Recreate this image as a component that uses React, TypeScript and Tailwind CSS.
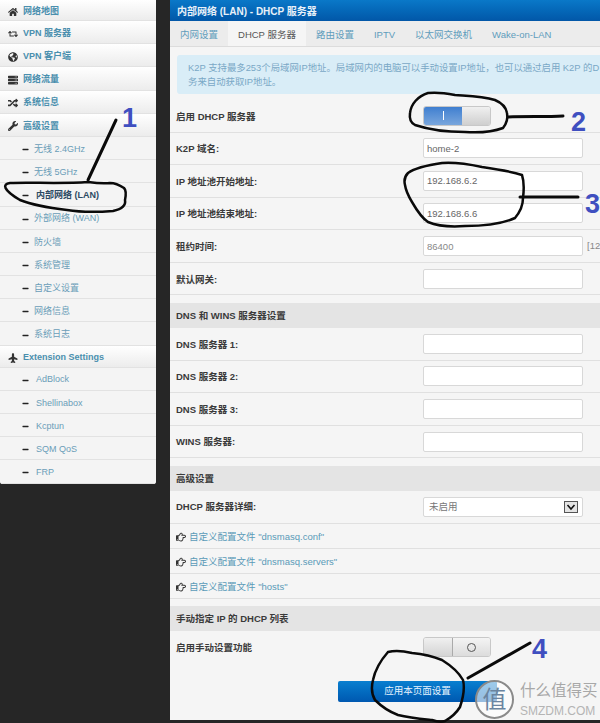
import React from 'react';
import {
  FaHome,
  FaRetweet,
  FaGlobeAmericas,
  FaServer,
  FaRandom,
  FaWrench,
  FaPlane,
  FaMinus,
  FaRegHandPointRight,
} from 'react-icons/fa';

const FONT = "font-['Liberation_Sans','Noto_Sans_CJK_SC',sans-serif]";

const topItems = [
  { label: '网络地图', icon: FaHome, h: 'h-[21px]' },
  { label: 'VPN 服务器', icon: FaRetweet, h: 'h-[23.2px]' },
  { label: 'VPN 客户端', icon: FaGlobeAmericas, h: 'h-[23.2px]' },
  { label: '网络流量', icon: FaServer, h: 'h-[23.2px]' },
  { label: '系统信息', icon: FaRandom, h: 'h-[23.2px]' },
  { label: '高级设置', icon: FaWrench, h: 'h-[23.2px]' },
];

const advItems = ['无线 2.4GHz', '无线 5GHz', '内部网络 (LAN)', '外部网络 (WAN)', '防火墙', '系统管理', '自定义设置', '网络信息', '系统日志'];
const extItems = ['AdBlock', 'Shellinabox', 'Kcptun', 'SQM QoS', 'FRP'];

const tabs = ['内网设置', 'DHCP 服务器', '路由设置', 'IPTV', '以太网交换机', 'Wake-on-LAN'];

function HeadItem({ label, icon: Icon, h, iconClass }: { label: string; icon: React.ComponentType<{ className?: string }>; h: string; iconClass?: string }) {
  return (
    <div className={`${h} pt-[3px] flex items-center pl-[8px] border-b border-[#e2e2e2] bg-gradient-to-b from-white to-[#ececec]`}>
      <Icon className={`w-[10px] h-[10px] text-[#333] shrink-0 ${iconClass ?? ''}`} />
      <span className="ml-[5px] text-[9px] font-bold text-[#4a8fae]">{label}</span>
    </div>
  );
}

function SubItem({ label, active, wide }: { label: string; active?: boolean; wide?: boolean }) {
  return (
    <div className="h-[23.2px] pt-[3px] flex items-center pl-[22px] border-b border-[#e2e2e2] bg-[#f4f4f4]">
      <FaMinus className="w-[7px] h-[7px] text-[#222] shrink-0" />
      <span className={active ? 'ml-[7px] text-[9px] font-bold text-[#2c4a63]' : `${wide ? 'ml-[7px]' : 'ml-[5px]'} text-[9px] text-[#6a9db8]`}>{label}</span>
    </div>
  );
}

function Section({ title }: { title: string }) {
  return <div className="h-[25px] pt-[2px] flex items-center pl-[6px] bg-[#e4e4e4] text-[9.5px] font-bold text-[#3a3a3a]">{title}</div>;
}

function InputRow({ label, value, muted, note }: { label: string; value?: string; muted?: boolean; note?: string }) {
  return (
    <div className="h-[32.6px] flex items-center border-b border-[#e0e0e0] pl-[6px]">
      <span className="w-[247px] shrink-0 pt-[2px] text-[9.5px] font-bold text-[#3a3a3a]">{label}</span>
      <input
        readOnly
        value={value ?? ''}
        className={`w-[160px] shrink-0 h-[20px] px-[3px] text-[9.5px] border border-[#d8d8d8] rounded-[2px] bg-white outline-none ${muted ? 'text-[#888]' : 'text-[#666]'}`}
      />
      {note && <span className="ml-[4px] text-[9.5px] text-[#888] whitespace-nowrap">{note}</span>}
    </div>
  );
}

function LinkRow({ text }: { text: string }) {
  return (
    <div className="h-[25px] pt-[2px] flex items-center pl-[6px] border-b border-[#e0e0e0]">
      <FaRegHandPointRight className="w-[10px] h-[10px] text-[#333]" />
      <span className="ml-[3px] text-[9.5px] text-[#5a9ab8]">{text}</span>
    </div>
  );
}

export default function App() {
  return (
    <div className={`${FONT} relative w-[600px] h-[723px] overflow-hidden bg-[#262626] flex items-start`}>
      {/* Left menu */}
      <div className="w-[156px] shrink-0 bg-[#f4f4f4] rounded-b-[3px] overflow-hidden">
        {topItems.map((item) => (
          <HeadItem key={item.label} {...item} />
        ))}
        {advItems.map((label) => (
          <SubItem key={label} label={label} active={label === '内部网络 (LAN)'} />
        ))}
        <HeadItem label="Extension Settings" icon={FaPlane} h="h-[22px]" iconClass="-rotate-90" />
        {extItems.map((label) => (
          <SubItem key={label} label={label} wide />
        ))}
      </div>

      {/* Main panel */}
      <div className="ml-[14px] w-[430px] h-[720px] bg-[#f5f5f5] overflow-hidden">
        <div className="h-[21px] pt-[2px] flex items-center pl-[7px] bg-gradient-to-b from-[#0a78c8] to-[#0257a8] text-[10px] font-bold text-[#e8f0f8] whitespace-nowrap">
          内部网络 (LAN) - DHCP 服务器
        </div>
        <div className="h-[26px] flex items-end bg-[#ececec] border-b border-[#dcdcdc]">
          {tabs.map((tab, i) => (
            <div
              key={tab}
              className={
                i === 1
                  ? 'h-[25px] pt-[4px] px-[10px] flex items-center bg-[#f5f5f5] text-[9.5px] text-[#555] whitespace-nowrap'
                  : 'h-[25px] pt-[4px] px-[10px] flex items-center text-[9.5px] text-[#5f9dbc] whitespace-nowrap'
              }
            >
              {tab}
            </div>
          ))}
        </div>
        <div className="ml-[7px] mt-[8px] h-[39px] pl-[11px] pt-[6px] bg-[#d9edf7] rounded-l-[3px] text-[9.4px] leading-[13.5px] text-[#7aa8c6] whitespace-nowrap overflow-hidden">
          <div>K2P 支持最多253个局域网IP地址。局域网内的电脑可以手动设置IP地址，也可以通过启用 K2P 的D</div>
          <div>务来自动获取IP地址。</div>
        </div>

        <div className="h-[38.5px] pt-[6px] flex items-center border-b border-[#e0e0e0] pl-[6px]">
          <span className="w-[247px] shrink-0 pt-[2px] text-[9.5px] font-bold text-[#3a3a3a]">启用 DHCP 服务器</span>
          <div className="w-[68px] h-[20px] flex rounded-[3px] border border-[#c8c8c8] overflow-hidden">
            <div className="w-[38px] flex items-center justify-center bg-gradient-to-b from-[#3f7fd0] to-[#79a6dc]">
              <div className="w-[1px] h-[9px] bg-white" />
            </div>
            <div className="flex-1 bg-gradient-to-b from-[#f0f0f0] to-[#cfcfcf]" />
          </div>
        </div>
        <InputRow label="K2P 域名:" value="home-2" />
        <InputRow label="IP 地址池开始地址:" value="192.168.6.2" />
        <InputRow label="IP 地址池结束地址:" value="192.168.6.6" />
        <InputRow label="租约时间:" value="86400" muted note="[12" />
        <InputRow label="默认网关:" />
        <div className="h-[7.5px]" />
        <Section title="DNS 和 WINS 服务器设置" />
        <InputRow label="DNS 服务器 1:" />
        <InputRow label="DNS 服务器 2:" />
        <InputRow label="DNS 服务器 3:" />
        <InputRow label="WINS 服务器:" />
        <div className="h-[7.6px]" />
        <Section title="高级设置" />
        <div className="h-[33px] flex items-center border-b border-[#e0e0e0] pl-[6px]">
          <span className="w-[247px] shrink-0 text-[9.5px] font-bold text-[#3a3a3a]">DHCP 服务器详细:</span>
          <div className="w-[160px] h-[20px] flex items-center justify-between pl-[5px] pr-[4px] border border-[#d8d8d8] rounded-[2px] bg-white text-[9.5px] text-[#777]">
            未启用
            <svg viewBox="0 0 14 12" className="w-[14px] h-[12px]">
              <rect x="0.5" y="0.5" width="13" height="11" fill="#e4e4e4" stroke="#555" />
              <path d="M3.5 4 L7 8 L10.5 4" fill="none" stroke="#111" strokeWidth="1.6" />
            </svg>
          </div>
        </div>
        <LinkRow text={'自定义配置文件 "dnsmasq.conf"'} />
        <LinkRow text={'自定义配置文件 "dnsmasq.servers"'} />
        <LinkRow text={'自定义配置文件 "hosts"'} />
        <div className="h-[7px]" />
        <Section title="手动指定 IP 的 DHCP 列表" />
        <div className="h-[33px] flex items-center pl-[6px]">
          <span className="w-[247px] shrink-0 pt-[2px] text-[9.5px] font-bold text-[#3a3a3a]">启用手动设置功能</span>
          <div className="w-[68px] h-[20px] flex rounded-[3px] border border-[#c8c8c8] overflow-hidden">
            <div className="w-[29px] bg-gradient-to-b from-[#f0f0f0] to-[#d4d4d4] border-r border-[#aaa]" />
            <div className="flex-1 flex items-center justify-center bg-gradient-to-b from-[#f4f4f4] to-[#dcdcdc]">
              <div className="w-[9px] h-[9px] rounded-full border border-[#555]" />
            </div>
          </div>
        </div>
        <div className="mt-[17px] ml-[168px] w-[159px] h-[21px] flex items-center justify-center rounded-[2px] bg-gradient-to-b from-[#0a7fd0] to-[#0058b0] text-[9.5px] text-[#e8f4ff]">
          应用本页面设置
        </div>
      </div>

      {/* Hand-drawn annotations over the screenshot */}
      <svg viewBox="0 0 600 723" className="absolute inset-0 w-[600px] h-[723px] pointer-events-none" fill="none" stroke="#0a0a0a" strokeWidth="2.5" strokeLinecap="round" strokeLinejoin="round">
        <path d="M116 120 L88 180" strokeWidth="3" />
        <path d="M88 182 C60 184 30 182 10 183 C2 184 3 190 20 200 C35 206 50 208 67 210 C85 213 100 212 113 211 C122 209 126 205 125 200 C126 195 126 190 124 188 C118 184 115 183 110 183 C103 184 95 183 88 182" />
        <path d="M428 93 C418 96 411 104 410 113 C409 120 411 123 415 125 C430 130 450 132 465 132 C480 133 495 131 503 128 C507 123 508 118 507 113 C506 107 502 103 495 100 C482 96 470 96 455 95 C445 93 436 92 428 93" />
        <path d="M508 117 C525 116 545 117 563 116" strokeWidth="3" />
        <path d="M442 163 C428 165 415 168 408 173 C404 177 404 181 405 185 C406 192 409 197 412 202 C416 209 422 218 428 222 C440 227 452 227 465 226 C482 226 502 224 515 218 C520 212 523 205 523 198 C524 190 524 181 522 175 C510 171 496 169 482 167 C468 164 455 162 442 163" />
        <path d="M520 197 L578 197" strokeWidth="3" />
        <path d="M388 652 C381 660 375 670 373 680 C371 688 372 695 375 700 C382 707 390 712 398 715 C410 718 422 719 432 720 C438 722 442 722 445 721 C452 717 457 712 460 707 C463 698 465 688 463 680 C458 671 450 665 442 660 C432 656 422 654 412 653 C404 651 395 650 388 652" />
        <path d="M468 678 L530 643" strokeWidth="3" />
      </svg>
      <span className="absolute left-[122px] top-[102px] text-[27px] leading-[32px] font-bold text-[#3f4fc0]">1</span>
      <span className="absolute left-[571px] top-[106px] text-[27px] leading-[32px] font-bold text-[#3f4fc0]">2</span>
      <span className="absolute left-[585px] top-[188px] text-[27px] leading-[32px] font-bold text-[#3f4fc0]">3</span>
      <span className="absolute left-[532px] top-[633px] text-[27px] leading-[32px] font-bold text-[#3f4fc0]">4</span>

      {/* Watermark */}
      <div className="absolute left-[475px] top-[680px] flex items-center">
        <div className="w-[39px] h-[39px] rounded-full border-2 border-[#8a8a8a] bg-white/60 flex items-center justify-center text-[24px] text-[#6a84a0]">值</div>
        <div className="ml-[6px]">
          <div className="text-[15.5px] leading-[20px] text-[#a8a8a8] whitespace-nowrap">什么值得买</div>
          <div className="mt-[3px] text-[12px] leading-[14px] text-[#b4b4b4] whitespace-nowrap">SMZDM.COM</div>
        </div>
      </div>
    </div>
  );
}
